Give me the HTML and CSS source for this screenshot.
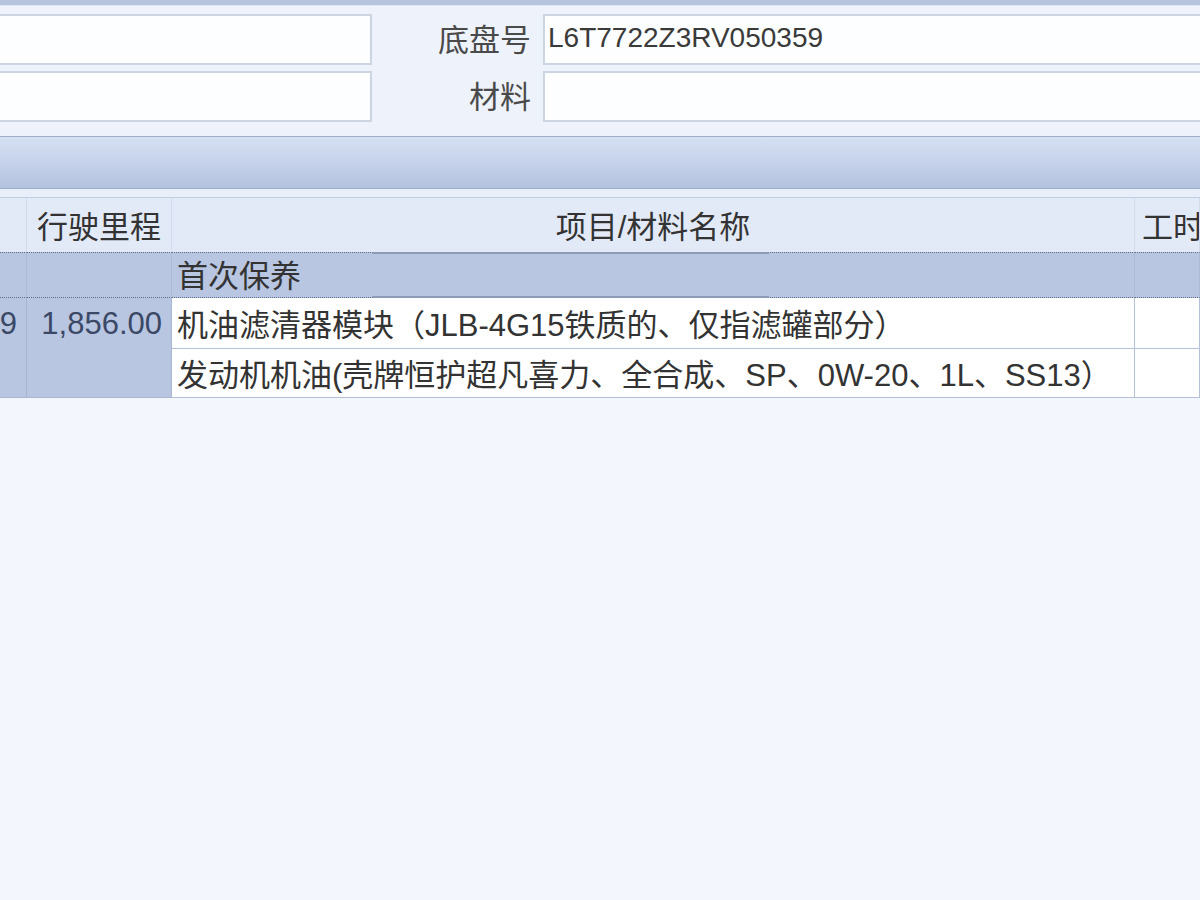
FILE: index.html
```html
<!DOCTYPE html>
<html lang="zh-CN">
<head>
<meta charset="utf-8">
<title>保养记录</title>
<link rel="stylesheet" href="styles.css">
</head>
<body>
<div class="page">
  <div class="topband"></div>
  <div class="form">
    <div class="field field-left"></div>
    <div class="label">底盘号</div>
    <div class="field field-right vin">L6T7722Z3RV050359</div>
    <div class="field field-left"></div>
    <div class="label">材料</div>
    <div class="field field-right"></div>
  </div>
  <div class="toolbar"></div>
  <div class="spacer"></div>
  <div class="grid">
    <div class="hcell"></div>
    <div class="hcell center">行驶里程</div>
    <div class="hcell center">项目/材料名称</div>
    <div class="hcell left">工时</div>

    <div class="gcell"></div>
    <div class="gcell"></div>
    <div class="gcell name seg">首次保养</div>
    <div class="gcell"></div>

    <div class="mcell num c1">9</div>
    <div class="mcell num c2">1,856.00</div>
    <div class="dcell name r1">机油滤清器模块（JLB-4G15铁质的、仅指滤罐部分）</div>
    <div class="dcell r1"></div>
    <div class="dcell name r2">发动机机油(壳牌恒护超凡喜力、全合成、SP、0W-20、1L、SS13）</div>
    <div class="dcell r2"></div>
  </div>
</div>
</body>
</html>
```
FILE: styles.css
```css
html, body {
  margin: 0;
  padding: 0;
  background: #f3f6fc;
}
body {
  width: 1200px;
  height: 900px;
  overflow: hidden;
  font-family: "Liberation Sans", "Noto Sans CJK SC", sans-serif;
  font-size: 31px;
  color: #333;
}
.page {
  width: 1200px;
}
.topband {
  height: 5px;
  background: #b6c3dc;
  border-bottom: 1px solid #dfe6f3;
}
.form {
  background: #eef2fa;
  display: grid;
  grid-template-columns: 372px 171px 1fr;
  grid-auto-rows: 51px;
  row-gap: 6px;
  padding: 8px 0 14px;
}
.field {
  background: #fdfeff;
  border: 2px solid #cdd4e2;
  box-sizing: border-box;
}
.field-left {
  border-left: none;
}
.field-right {
  border-right: none;
}
.label {
  display: flex;
  align-items: center;
  justify-content: flex-end;
  padding-right: 12px;
  color: #4a4a4a;
  padding-bottom: 4px;
}
.vin {
  font-size: 28px;
  color: #3a3a3a;
  display: flex;
  align-items: center;
  padding-left: 3px;
  padding-bottom: 4px;
}
.toolbar {
  height: 51px;
  border-top: 1px solid #9eadc8;
  border-bottom: 1px solid #9fadc8;
  background: linear-gradient(to bottom, #d6e0f3 0%, #c8d4ec 45%, #b3c2df 100%);
}
.spacer {
  height: 8px;
  background: #e9eff9;
  border-bottom: 1px solid #c3cee2;
}
.grid {
  display: grid;
  grid-template-columns: 27px 145px 963px 1fr;
  grid-template-rows: 54px 46px 51px 49px;
}
.hcell {
  background: #e3eaf7;
  border-right: 1px solid #d2dbec;
  display: flex;
  align-items: center;
  padding-bottom: 2px;
  white-space: nowrap;
  overflow: hidden;
}
.hcell.center {
  justify-content: center;
}
.hcell.left {
  padding-left: 7px;
}
.gcell {
  background: #b8c6e1;
  border-top: 1px dotted #5d6b88;
  border-bottom: 1px dotted #5d6b88;
  border-right: 1px solid #aebbd4;
  display: flex;
  align-items: center;
  padding-bottom: 4px;
  white-space: nowrap;
}
.gcell.name {
  padding-left: 5px;
}
.seg {
  position: relative;
}
.seg::before,
.seg::after {
  content: "";
  position: absolute;
  left: 200px;
  width: 397px;
  height: 2px;
  background: #8e9bb6;
}
.seg::before {
  top: -1px;
}
.seg::after {
  bottom: -1px;
}
.mcell {
  grid-row: 3 / span 2;
  background: #b8c6e1;
  border-right: 1px solid #aab7d0;
  border-bottom: 1px solid #aab7d0;
  display: flex;
  align-items: flex-start;
  justify-content: flex-end;
  padding: 8px 9px 0 0;
  color: #3b4866;
  white-space: nowrap;
  overflow: hidden;
}
.mcell.c1 {
  grid-column: 1;
}
.mcell.c2 {
  grid-column: 2;
}
.dcell {
  background: #ffffff;
  border-right: 1px solid #b4c0d7;
  border-bottom: 1px solid #b4c0d7;
  display: flex;
  align-items: center;
  white-space: nowrap;
  padding-bottom: 2px;
}
.dcell.name {
  padding-left: 5px;
  grid-column: 3;
}
.r1 {
  grid-row: 3;
}
.r2 {
  grid-row: 4;
}
```
